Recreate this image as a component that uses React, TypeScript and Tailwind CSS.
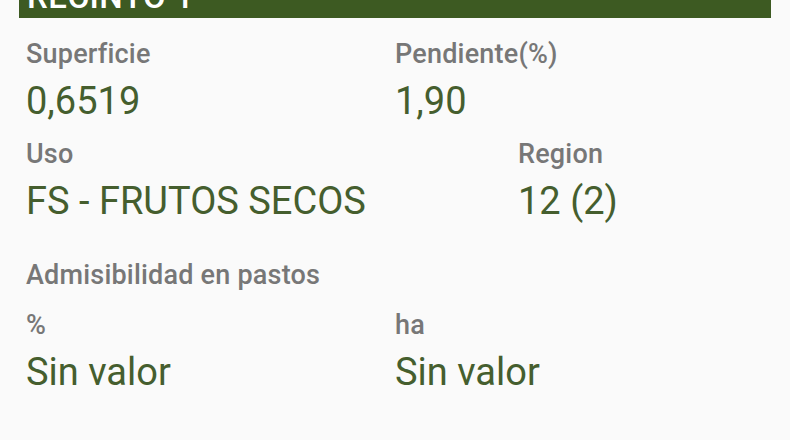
import React from "react";

const label = "text-[27px] font-medium text-[#777777] leading-none tracking-[0.2px]";
const value = "text-[38px] text-[#455e2e] leading-none";

function Field({ l, v, className = "" }: { l: string; v: string; className?: string }) {
  return (
    <div className={`flex flex-col ${className}`}>
      <div className={label}>{l}</div>
      <div className={`${value} mt-[14px]`}>{v}</div>
    </div>
  );
}

export default function App() {
  return (
    <div
      className="w-[790px] h-[440px] bg-[#fafafa] overflow-hidden"
      style={{ fontFamily: "Roboto, 'Noto Sans', sans-serif" }}
    >
      <div className="mx-[19px] h-[18px] bg-[#3d5a22] overflow-hidden">
        <div className="text-white text-[33px] font-medium leading-none mt-[-20px] ml-[8px] tracking-[0.5px]">
          RECINTO 1
        </div>
      </div>
      <div className="mx-[19px] px-[7px] pt-[23px]">
        <div className="flex">
          <Field l="Superficie" v="0,6519" className="flex-1" />
          <Field l="Pendiente(%)" v="1,90" className="flex-1" />
        </div>
        <div className="flex mt-[21px]">
          <Field l="Uso" v="FS - FRUTOS SECOS" className="flex-[2]" />
          <Field l="Region" v="12 (2)" className="flex-1" />
        </div>
        <div className={`${label} mt-[42px]`}>Admisibilidad en pastos</div>
        <div className="flex mt-[23px]">
          <Field l="%" v="Sin valor" className="flex-1" />
          <Field l="ha" v="Sin valor" className="flex-1" />
        </div>
      </div>
    </div>
  );
}
